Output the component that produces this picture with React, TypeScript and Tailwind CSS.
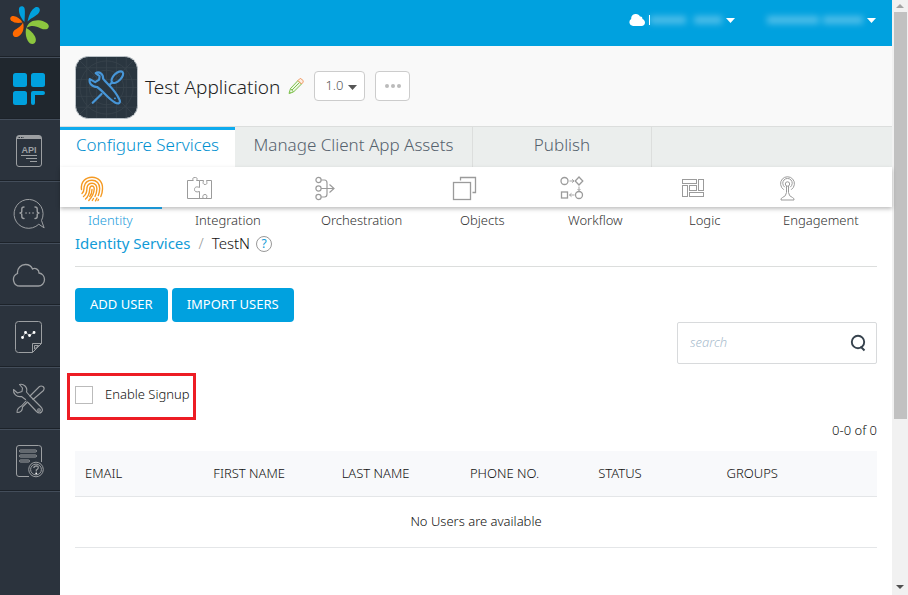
import React, { useState } from 'react';

type IconProps = { className?: string };

const LogoIcon = () => (
  <svg width="60" height="56" viewBox="0 0 60 56" aria-hidden="true">
    <path d="M24.5 22 C20 17 18.500 12 19 8.500 C19.600 6 22.500 5.300 24.200 7.500 C25.400 10 24.800 16 24.500 22 Z" fill="#00a0dd" />
    <path d="M27.500 21.500 C29 14 31.500 9.500 35 7.400 C38 6 40.500 8 39.700 11 C38.500 15.500 32 17 27.500 21.500 Z" fill="#00a0dd" />
    <path d="M22.500 22.500 C18 23.500 14 23 11 20.500 C9.300 18.500 10.500 15.800 13.500 16 C17.500 16.500 20.500 19 22.500 22.500 Z" fill="#ff6a00" />
    <path d="M23 22.500 C25 29 22 35.500 17 37 C14 37.700 11.900 35 13.200 32 C15 28.500 20.500 28 23 22.500 Z" fill="#ff6a00" />
    <path d="M26.500 28 C28 22.500 33 19.800 39 20.300 C44 20.800 49 23.500 48.800 26.500 C48.500 29.600 44.500 30 41 28.500 C36 26 31.500 24.500 26.500 28 Z" fill="#8cc63f" />
    <path d="M26.200 28 C31 30.500 35.800 35.500 35.900 40 C35.800 43.500 32.500 45 29.800 43.200 C26.500 40.500 24.800 34 26.200 28 Z" fill="#8cc63f" />
  </svg>
);

const AppsIcon = () => (
  <svg width="34" height="34" viewBox="0 0 34 34" fill="#00a1de" aria-hidden="true">
    <rect x="1" y="1" width="14" height="14" rx="2.500" />
    <rect x="19" y="1" width="14" height="14" rx="2.500" />
    <rect x="1" y="19" width="14" height="14" rx="2.500" />
    <path d="M21 19 H31 Q33 19 33 21 Q33 23 31 23 H23 V31 Q23 33 21 33 Q19 33 19 31 V21 Q19 19 21 19 Z" />
  </svg>
);

const ApiIcon = () => (
  <svg width="34" height="34" viewBox="0 0 34 34" fill="none" stroke="#9c9fa2" aria-hidden="true">
    <rect x="4.500" y="1.500" width="25" height="31" rx="2.500" />
    <path d="M5 3.500 H29" strokeWidth="3" />
    <path d="M6.500 3.500 H12" stroke="#2b333d" strokeDasharray="1.500 1" />
    <text x="17" y="19" textAnchor="middle" fontSize="9" fontWeight="700" fill="#9c9fa2" stroke="none" fontFamily="Liberation Sans, sans-serif">API</text>
    <path d="M9 21.500 H25 M14 24.500 H25 M18 27.500 H25" />
  </svg>
);

const ChatCodeIcon = () => (
  <svg width="34" height="34" viewBox="0 0 34 34" fill="none" stroke="#9c9fa2" strokeLinecap="round" strokeLinejoin="round" aria-hidden="true">
    <path d="M26.500 28.500 A14.500 14.500 0 1 1 29.500 24.500 L32 31.500 Z" />
    <path d="M12 11 Q9.800 11 9.800 13 V15 Q9.800 17 8 17 Q9.800 17 9.800 19 V20.500 Q9.800 22.500 12 22.500" strokeWidth="1.400" />
    <path d="M23 11 Q25.200 11 25.200 13 V15 Q25.200 17 27 17 Q25.200 17 25.200 19 V20.500 Q25.200 22.500 23 22.500" strokeWidth="1.400" />
    <path d="M14 17 h.1 M17.500 17 h.1 M21 17 h.1" strokeWidth="1.600" />
  </svg>
);

const CloudIcon = () => (
  <svg width="34" height="34" viewBox="0 0 34 34" fill="none" stroke="#9c9fa2" strokeWidth="1.300" aria-hidden="true">
    <path d="M8 28 A6.500 6.500 0 0 1 5.500 15.500 C5 10 9 6.500 13.500 6.500 C17.500 6.500 19.500 8.500 20.500 11 C23.500 9.500 27 11.500 27 15 C30.500 15.500 32.500 18.500 32.500 21.500 C32.500 25.500 29.500 28 26.500 28 Z" />
  </svg>
);

const ReportIcon = () => (
  <svg width="34" height="34" viewBox="0 0 34 34" fill="none" stroke="#9c9fa2" aria-hidden="true">
    <path d="M20.500 32.500 H6.500 Q3.500 32.500 3.500 29.500 V4.500 Q3.500 1.500 6.500 1.500 H26.500 Q29.500 1.500 29.500 4.500 V23.500 L20.500 32.500 V23.500 H29.500" />
    <path d="M22.500 29 V25.500 H26.500 Z" />
    <path d="M10.500 17.500 L13.500 12.500 L17.500 15.500 L22 12.500" stroke="#9c9fa2" />
    <path d="M10.500 17.500 h.1 M13.500 12.500 h.1 M17.500 15.500 h.1 M22 12.500 h.1" stroke="#fff" strokeWidth="2.800" strokeLinecap="round" />
  </svg>
);

const ToolsIcon = () => (
  <svg width="34" height="34" viewBox="0 0 34 34" fill="none" stroke="#9c9fa2" strokeWidth="1.100" strokeLinejoin="round" strokeLinecap="round" aria-hidden="true">
    <path d="M13.500 17.500 L9.500 14.500 C4.500 15.500 1 11.500 1.500 7.500 L5.500 11 L10 9.500 L10.500 6 L7.500 2.500 C11.500 1.500 16 5 14.500 10 L18 14 L28.500 24.500 C30.500 26.500 31 28.500 29.500 30 C28 31.500 26 31 24.500 29.500 L16 20.500" />
    <circle cx="27" cy="28" r="1.300" />
    <path d="M18 14 L27.500 4.500 Q29 3.500 31 4.500 Q33 6 31.500 8.500 L21 17.500" />
    <path d="M15.500 20 L10.500 25 C10.500 28.500 8.500 30.500 5 30.500 C4.500 28 7 25 9.500 24 L14 19" />
  </svg>
);

const HelpDocIcon = () => (
  <svg width="34" height="34" viewBox="0 0 34 34" fill="none" stroke="#9c9fa2" aria-hidden="true">
    <path d="M17 32.500 H7 Q4.500 32.500 4.500 30 V4 Q4.500 1.500 7 1.500 H26.500 Q29.500 1.500 29.500 4 V18" />
    <rect x="7.500" y="6" width="17" height="2" rx="1" />
    <rect x="7.500" y="11" width="17" height="2" rx="1" />
    <rect x="7.500" y="16" width="10" height="2" rx="1" />
    <circle cx="24" cy="25.500" r="7.300" />
    <circle cx="24" cy="25.500" r="5.400" />
    <path d="M21.800 24 Q22 21.800 24.300 21.800 Q26.600 22 26.200 24 Q25.800 25.300 24.300 26 V27.500" strokeWidth="1.200" />
    <path d="M24.200 29.300 h.1" stroke="#fff" strokeWidth="1.800" strokeLinecap="round" />
  </svg>
);

const AppTileIcon = ({ className }: IconProps) => (
  <svg className={className} width="63" height="63" viewBox="0 0 64 64" fill="none" aria-hidden="true">
    <rect x=".5" y=".5" width="63" height="63" rx="13" fill="#2a3640" stroke="#bcc3c8" />
    <g stroke="#38444d" strokeWidth=".8">
      <circle cx="32" cy="32" r="27" />
      <circle cx="32" cy="32" r="17.500" />
      <path d="M4 4 L60 60 M60 4 L4 60 M32 1 V63 M1 32 H63 M12 1 V63 M52 1 V63 M1 12 H63 M1 52 H63 M22 1 V63 M42 1 V63 M1 24 H63 M1 41 H63" />
    </g>
    <g stroke="#4796d8" strokeWidth="2.200" strokeLinejoin="round" strokeLinecap="round">
      <path d="M15 23.500 L20.500 26.500 L24.500 24 L25 20.500 L21 17.500 C24.500 15 29 18.500 28.500 23 C33 29 40 33 45 44 C47 48 44 49 41 47.500 C34 44 29 36 22.500 31.500 C17 31.500 14 27.500 15 23.500 Z" fill="#2a3640" />
      <ellipse cx="43" cy="21.500" rx="7.500" ry="3.800" transform="rotate(-45 43 21.500)" />
      <path d="M37.500 27 L35 29.500 M27 38.500 L18 47.500" />
      <path d="M40.500 43 h.2" strokeWidth="1.800" />
    </g>
  </svg>
);

const PencilIcon = () => (
  <svg width="16" height="18" viewBox="0 0 16 18" fill="none" strokeWidth="1" strokeLinejoin="round" aria-hidden="true">
    <path d="M1 16.500 L2.500 11.500 L10 3.500 L13.500 7 L5.500 15 Z" stroke="#7cc04b" fill="#eef7e4" />
    <path d="M2.500 11.500 L5.500 15 M4 13 L11.500 5.500 M1.500 15 L2.800 16" stroke="#7cc04b" />
    <path d="M10 3.500 L11.800 1.700 Q12.500 1.200 13.500 2 L15 3.700 Q15.500 4.500 14.900 5.400 L13.500 7 Z" stroke="#f0945a" fill="#fdeee4" />
  </svg>
);

const FingerprintIcon = () => (
  <svg width="24" height="26" viewBox="0 0 24 26" fill="none" stroke="#f59a23" strokeWidth="1.400" strokeLinecap="round" aria-hidden="true">
    <path d="M1.500 13.500 C.5 6 5.500 1.200 12 1.200 C18.500 1.200 23 6 22.500 13 C22.400 16 21.800 18.500 20.800 20.500" />
    <path d="M2 17.500 C4.500 15.500 3.800 13 4.200 10.500 C5 6.500 8.300 4.200 12 4.200 C16.500 4.200 19.800 7.500 19.700 12.500 C19.600 15.500 19.200 17.500 18.300 19.500" />
    <path d="M3.500 20.500 C7.500 17.500 6.700 14 7 11.500 C7.500 9 9.500 7.200 12 7.200 C15 7.200 17 9.500 16.900 12.800 C16.800 16.500 16 18.500 15 20.500" />
    <path d="M5.500 23 C9.500 19.500 9.500 16 9.700 13 C9.900 11 10.700 10 12 10 C13.500 10 14.300 11.200 14.200 13 C14 18 12 21 8.800 24.500" />
    <path d="M12 13.500 C12 17 11 19 9.800 20.500 M13.500 22.500 L12.300 24.500 M17 22 L15.500 24.800 M18.500 23.500 L18 24.500" />
  </svg>
);

const PuzzleIcon = () => (
  <svg width="26" height="26" viewBox="0 0 26 26" fill="none" stroke="#9b9b9b" strokeLinejoin="round" aria-hidden="true">
    <path d="M12.500 4.500 H9.500 C11 2 9.500 1.500 8 1.500 C6 1.500 5 2.500 6.300 4.500 H.5 V22.500 H24.500 V4.500 H19.500 C20.500 8 19.500 8.500 18 8.500 C16.500 8.500 15.500 7.500 16.500 4.500 H12.500 V11.500 C9 10 7.500 11.500 7.500 13.500 C7.500 15.500 9 16.500 12.500 15.500 V22.500 M16 22 C15.300 19.500 16.500 18.500 18 18.500 C19.500 18.500 20.500 19.500 19.500 22" />
  </svg>
);

const OrchestrationIcon = () => (
  <svg width="26" height="26" viewBox="-2 0 26 26" fill="none" stroke="#9b9b9b" strokeWidth="1.200" aria-hidden="true">
    <circle cx="3.500" cy="4" r="2.600" />
    <circle cx="3.500" cy="12.500" r="2.600" />
    <circle cx="3.500" cy="21" r="2.600" />
    <path d="M6 4 H9.500 Q12 4 12 7 V18 Q12 21 9.500 21 H6 M6 12.500 H18.500 M14.500 8.500 L19 12.500 L14.500 16.500" />
  </svg>
);

const ObjectsIcon = () => (
  <svg width="26" height="26" viewBox="0 0 26 26" fill="none" stroke="#9b9b9b" strokeWidth="1.300" aria-hidden="true">
    <rect x="1.500" y="6.500" width="17" height="17" />
    <path d="M8.500 4.500 V1.500 H23.500 V16.500 H20.500" />
  </svg>
);

const WorkflowIcon = () => (
  <svg width="26" height="26" viewBox="0 0 26 26" fill="none" stroke="#9b9b9b" strokeWidth="1.300" aria-hidden="true">
    <circle cx="4.500" cy="5" r="3.500" />
    <path d="M19 1 L22.800 5 L19 9 L15.200 5 Z" />
    <rect x="1.500" y="16" width="6" height="6" />
    <circle cx="19" cy="19" r="3.500" />
    <path d="M9.500 5 H14 M12 3.300 L14 5 L12 6.700 M19 10.500 V14.500 M17.500 13 L19 14.500 L20.500 13 M14.500 19 H9.500 M11.500 17.300 L9.500 19 L11.500 20.700" strokeWidth=".9" />
  </svg>
);

const LogicIcon = () => (
  <svg width="26" height="26" viewBox="-1 0 26 26" fill="none" stroke="#9b9b9b" aria-hidden="true">
    <rect x=".5" y="3.500" width="14" height="4" />
    <rect x="16.500" y="3.500" width="5" height="11" />
    <rect x=".5" y="9.500" width="5" height="11" />
    <rect x="7.500" y="9.500" width="7" height="5" />
    <rect x="7.500" y="16.500" width="14" height="4" />
  </svg>
);

const EngagementIcon = () => (
  <svg width="26" height="26" viewBox="-4 0 26 26" fill="none" stroke="#9b9b9b" aria-hidden="true">
    <path d="M4.500 13.500 A7 7 0 1 1 12.500 13.500 M5.500 11 A4.800 4.800 0 1 1 11.500 11" strokeLinecap="round" />
    <circle cx="8.500" cy="8" r="2.200" />
    <path d="M7.500 10 V16.500 Q7 20.500 3.500 21.500 Q1.500 22.500 2 24 H15 Q15.500 22.500 13.500 21.500 Q10 20.500 9.500 16.500 V10" />
  </svg>
);

const SearchIcon = () => (
  <svg width="16" height="18" viewBox="0 0 16 18" fill="none" stroke="#36424d" strokeWidth="1.900" aria-hidden="true">
    <circle cx="8" cy="8" r="6.200" />
    <path d="M10.500 12.500 L14.500 16.500" />
  </svg>
);

const Caret = ({ className }: IconProps) => (
  <svg className={className} width="9" height="5" viewBox="0 0 9 5" fill="currentColor" aria-hidden="true">
    <path d="M0 0 H9 L4.500 5 Z" />
  </svg>
);

const sideItems = [
  { label: 'Apps', Icon: AppsIcon },
  { label: 'API Management', Icon: ApiIcon },
  { label: 'Custom Code', Icon: ChatCodeIcon },
  { label: 'Environments', Icon: CloudIcon },
  { label: 'Reports', Icon: ReportIcon },
  { label: 'Settings', Icon: ToolsIcon },
  { label: 'Support', Icon: HelpDocIcon },
];

const services = [
  { label: 'Identity', Icon: FingerprintIcon },
  { label: 'Integration', Icon: PuzzleIcon },
  { label: 'Orchestration', Icon: OrchestrationIcon },
  { label: 'Objects', Icon: ObjectsIcon },
  { label: 'Workflow', Icon: WorkflowIcon },
  { label: 'Logic', Icon: LogicIcon },
  { label: 'Engagement', Icon: EngagementIcon },
];

const columns = ['EMAIL', 'FIRST NAME', 'LAST NAME', 'PHONE NO.', 'STATUS', 'GROUPS'];

const Sidebar = () => (
  <aside className="w-15 shrink-0 bg-[#2b333d]">
    <a href="#home" aria-label="Home" className="block h-14 border-b border-[#1c2229] box-content">
      <LogoIcon />
    </a>
    <nav>
      {sideItems.map(({ label, Icon }, i) => (
        <a
          key={label}
          href="#"
          aria-label={label}
          className={`flex h-[62px] items-center justify-center pt-0.5 pr-0.5 border-t border-t-[#434d5a] border-b border-b-[#1c2229] ${i === 0 ? 'bg-[#20272e]' : ''}`}
        >
          <Icon />
        </a>
      ))}
      <div className="border-t border-[#434d5a]" />
    </nav>
  </aside>
);

const TopBar = () => (
  <header className="flex h-[46px] items-center justify-end bg-[#00a1df] pr-4 pb-1.5 text-white">
    <button aria-label="Cloud account" className="flex items-center">
      <svg width="16" height="12" viewBox="0 0 16 12" fill="currentColor" aria-hidden="true">
        <path d="M4 12 A3.800 3.800 0 0 1 2.200 5 C2 1.500 4.500 0 7 0 C9 0 10.300 1 11 2.600 C12.600 2.300 13.600 3.500 13.400 5 C15 5.500 16 7 16 8.500 C16 10.600 14.500 12 12.500 12 Z" />
      </svg>
      <span className="ml-1 h-2.5 w-px bg-white" />
      <span className="mr-1 flex gap-2 blur-[3px]">
        <span className="h-2 w-9 bg-white/30" />
        <span className="h-2 w-7 bg-white/30" />
      </span>
      <Caret />
    </button>
    <button aria-label="User account" className="ml-8 flex items-center">
      <span className="mr-1 flex gap-1 blur-[3px]">
        <span className="h-2 w-13 bg-white/30" />
        <span className="h-2 w-10 bg-white/30" />
      </span>
      <Caret />
    </button>
  </header>
);

const AppHeader = () => (
  <div className="flex h-20 items-center bg-[#f9f9f9] px-[15px]">
    <AppTileIcon className="mt-0.5" />
    <h1 className="ml-[7px] pt-0.5 text-[19px] text-[#222]">Test Application</h1>
    <button aria-label="Edit name" className="ml-2">
      <PencilIcon />
    </button>
    <div className="relative ml-2.5 text-[#555]">
      <select
        aria-label="Version"
        className="h-[30px] w-[51px] appearance-none rounded-sm border border-[#ccc] bg-white pl-2.5 text-[13px]"
      >
        <option>1.0</option>
      </select>
      <Caret className="pointer-events-none absolute top-3.5 right-2" />
    </div>
    <button aria-label="More" className="ml-2.5 flex h-[30px] w-[35px] items-center justify-center gap-0.5 rounded-sm border border-[#ccc] bg-white">
      <span className="size-1 rounded-full bg-[#bbb]" />
      <span className="size-1 rounded-full bg-[#bbb]" />
      <span className="size-1 rounded-full bg-[#bbb]" />
    </button>
  </div>
);

const Tabs = () => (
  <nav className="flex h-[41px] border-t border-[#dcdedd] bg-[#ebeeed] text-[17px] text-[#56626d]">
    <a href="#configure" className="flex w-[175px] justify-center border-t-3 border-[#0fabee] bg-white pt-0.5 text-[#0090d0]">
      Configure Services
    </a>
    <a href="#assets" className="flex w-[238px] justify-center border-r border-[#dcdedd] pt-[5px]">
      Manage Client App Assets
    </a>
    <a href="#publish" className="flex w-[179px] justify-center border-r border-[#dcdedd] pt-[5px]">
      Publish
    </a>
  </nav>
);

const ServiceNav = () => (
  <nav className="relative h-10 bg-white shadow-[0_2px_4px_rgba(0,0,0,0.25)]">
    <ul className="grid grid-cols-[107fr_126fr_139fr_108fr_121fr_94fr_117fr] pl-5">
      {services.map(({ label, Icon }, i) => (
        <li key={label}>
          <a href={`#${label.toLowerCase()}`} className="block">
            <span className="flex h-10 items-center pt-1">
              <Icon />
            </span>
            <span
              className={`block border-t-2 pt-0.5 pl-2 text-[13px] ${i === 0 ? 'w-[82px] border-[#1b95d3] text-[#1b9bdb]' : 'border-transparent text-[#333]'}`}
            >
              {label}
            </span>
          </a>
        </li>
      ))}
    </ul>
  </nav>
);

const Scrollbar = () => (
  <div className="flex w-4 shrink-0 flex-col items-center bg-[#f1f1f1]" aria-hidden="true">
    <svg className="my-1" width="8" height="4" viewBox="0 0 8 4" fill="#a3a3a3">
      <path d="M0 4 H8 L4 0 Z" />
    </svg>
    <div className="h-[407px] w-[13px] bg-[#c1c1c1]" />
    <svg className="mt-auto mb-1.5" width="8" height="4" viewBox="0 0 8 4" fill="#505050">
      <path d="M0 0 H8 L4 4 Z" />
    </svg>
  </div>
);

export default function App() {
  const [signup, setSignup] = useState(false);
  const [query, setQuery] = useState('');

  return (
    <div className="flex min-h-screen bg-white font-['Noto_Sans','Open_Sans',sans-serif] text-[13px] font-light text-[#111]">
      <Sidebar />
      <div className="min-w-0 flex-1">
        <TopBar />
        <AppHeader />
        <Tabs />
        <ServiceNav />

        <main className="px-[15px] pt-[22px]">
          <div className="flex h-[38px] items-center border-b border-[#dcdedd] pb-2 text-[15px]">
            <a href="#identity-services" className="font-normal text-[#119bd7]">Identity Services</a>
            <span className="px-2 text-[#999]">/</span>
            <span>TestN</span>
            <button aria-label="Help" className="ml-1.5 flex size-4 items-center justify-center rounded-full border border-[#999] text-xs font-normal text-[#119bd7]">
              ?
            </button>
          </div>

          <div className="mt-[21px] flex gap-1">
            <button className="h-[34px] rounded-sm bg-[#00a1df] px-[15px] font-normal text-white">ADD USER</button>
            <button className="h-[34px] rounded-sm bg-[#00a1df] px-[15px] font-normal text-white">IMPORT USERS</button>
          </div>

          <div className="ml-auto flex h-[42px] w-[200px] items-center rounded-xs border border-[#d8dadc] pr-2.5 pl-3">
            <input
              type="search"
              aria-label="Search users"
              placeholder="search"
              value={query}
              onChange={(e) => setQuery(e.target.value)}
              className="min-w-0 flex-1 outline-none placeholder:italic placeholder:text-[#a9bccd]"
            />
            <button aria-label="Search">
              <SearchIcon />
            </button>
          </div>

          <label className="-ml-2 mt-[9px] flex h-[47px] w-fit items-center gap-3 border-3 border-[#ed1c24] pr-1 pb-1 pl-[5px]">
            <input
              type="checkbox"
              checked={signup}
              onChange={(e) => setSignup(e.target.checked)}
              className="size-[18px] appearance-none border border-[#bbb] bg-white checked:bg-[#00a1df]"
            />
            Enable Signup
          </label>

          <p className="mb-[11px] text-right leading-5">0-0 of 0</p>

          <table className="w-full table-fixed text-left">
            <thead>
              <tr className="h-[45px] border-b border-[#e4e6e8] bg-[#f8f9fb]">
                {columns.map((col) => (
                  <th key={col} className="w-[16%] px-2.5 font-light last:w-[20%]">{col}</th>
                ))}
              </tr>
            </thead>
            <tbody>
              <tr className="h-[51px] border-b border-[#e4e6e8]">
                <td colSpan={6} className="text-center">No Users are available</td>
              </tr>
            </tbody>
          </table>
        </main>
      </div>
      <Scrollbar />
    </div>
  );
}
